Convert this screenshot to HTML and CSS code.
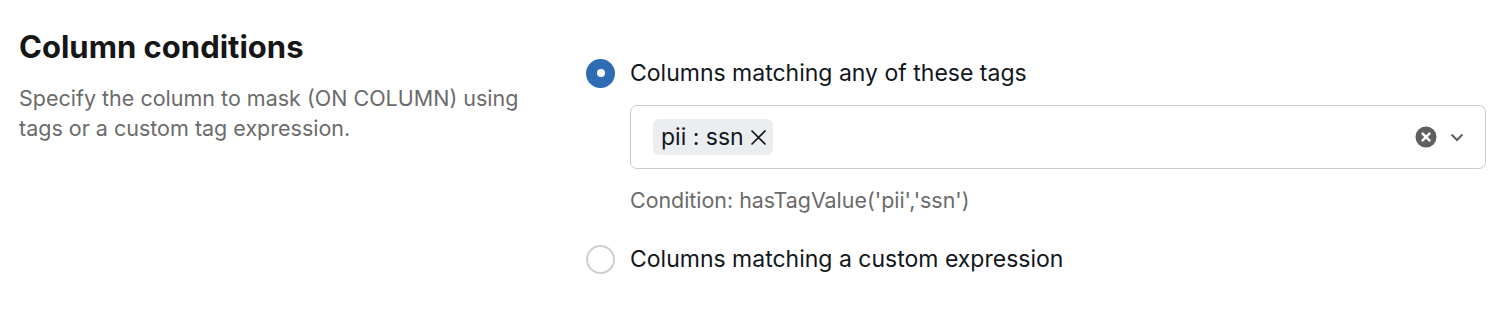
FILE: index.html
```html
<!DOCTYPE html>
<html>
<head>
<meta charset="utf-8">
<link rel="stylesheet" href="styles.css">
</head>
<body>
<div class="section">
  <div class="intro">
    <h2 class="title">Column conditions</h2>
    <p class="desc">Specify the column to mask (ON COLUMN) using tags or a custom tag expression.</p>
  </div>
  <div class="options">
    <label class="option">
      <span class="radio radio-on"></span>
      <span class="option-label">Columns matching any of these tags</span>
    </label>
    <div class="option-body">
      <div class="select">
        <div class="tags">
          <span class="tag">pii : ssn
            <svg class="tag-x" width="17" height="17" viewBox="0 0 17 17"><path d="M1.5 1.5 L15.5 15.5 M15.5 1.5 L1.5 15.5" stroke="#11171c" stroke-width="1.7" fill="none"/></svg>
          </span>
        </div>
        <div class="select-icons">
          <svg class="clear" width="22" height="22" viewBox="0 0 22 22"><circle cx="11" cy="11" r="10.5" fill="#5f5f5f"/><path d="M7.6 7.6 L14.4 14.4 M14.4 7.6 L7.6 14.4" stroke="#fff" stroke-width="2.6" stroke-linecap="round"/></svg>
          <svg class="chev" width="16" height="16" viewBox="0 0 16 16"><path d="M2.5 5.5 L8 11 L13.5 5.5" stroke="#5f5f5f" stroke-width="2" fill="none"/></svg>
        </div>
      </div>
      <div class="hint">Condition: hasTagValue('pii','ssn')</div>
    </div>
    <label class="option option-2">
      <span class="radio"></span>
      <span class="option-label">Columns matching a custom expression</span>
    </label>
  </div>
</div>
</body>
</html>
```

FILE: styles.css
```css
html, body {
  margin: 0;
  padding: 0;
  background: #ffffff;
}
body {
  font-family: Inter, "Noto Sans", "Liberation Sans", sans-serif;
  color: #11171c;
}
.section {
  display: flex;
  padding: 27px 26px 0 19px;
  gap: 19px;
}
.intro {
  width: 548px;
  flex: none;
}
.title {
  margin: 0;
  font-size: 31px;
  line-height: 40px;
  font-weight: 700;
  color: #161616;
}
.desc {
  margin: 16px 0 0 0;
  font-size: 21.5px;
  line-height: 30px;
  color: #6b6b6b;
  width: 530px;
}
.options {
  flex: 1;
  display: flex;
  flex-direction: column;
  padding-top: 31px;
}
.option {
  display: flex;
  align-items: center;
  gap: 15px;
  height: 30px;
}
.radio {
  width: 29px;
  height: 29px;
  box-sizing: border-box;
  border-radius: 50%;
  border: 2px solid #cfcfcf;
  background: #fff;
  flex: none;
  display: flex;
  align-items: center;
  justify-content: center;
}
.radio-on {
  background: #2f6db3;
  border-color: #2f6db3;
}
.radio-on::after {
  content: "";
  width: 8px;
  height: 8px;
  border-radius: 50%;
  background: #fff;
}
.option-label {
  font-size: 23px;
  color: #11171c;
}
.option-body {
  padding-left: 44px;
  padding-top: 17px;
}
.select {
  height: 64px;
  box-sizing: border-box;
  border: 1.5px solid #cbcbcb;
  border-radius: 7px;
  display: flex;
  align-items: center;
  padding: 0 20px 0 22px;
}
.tags {
  flex: 1;
  display: flex;
}
.tag {
  display: inline-flex;
  align-items: center;
  gap: 6px;
  height: 36px;
  padding: 0 6px 0 8px;
  background: #ebedf0;
  border-radius: 6px;
  font-size: 23px;
  color: #11171c;
}
.select-icons {
  display: flex;
  align-items: center;
  gap: 12px;
}
.hint {
  margin-top: 17px;
  font-size: 21.4px;
  line-height: 28px;
  color: #6b6b6b;
}
.option-2 {
  margin-top: 30px;
}
```
